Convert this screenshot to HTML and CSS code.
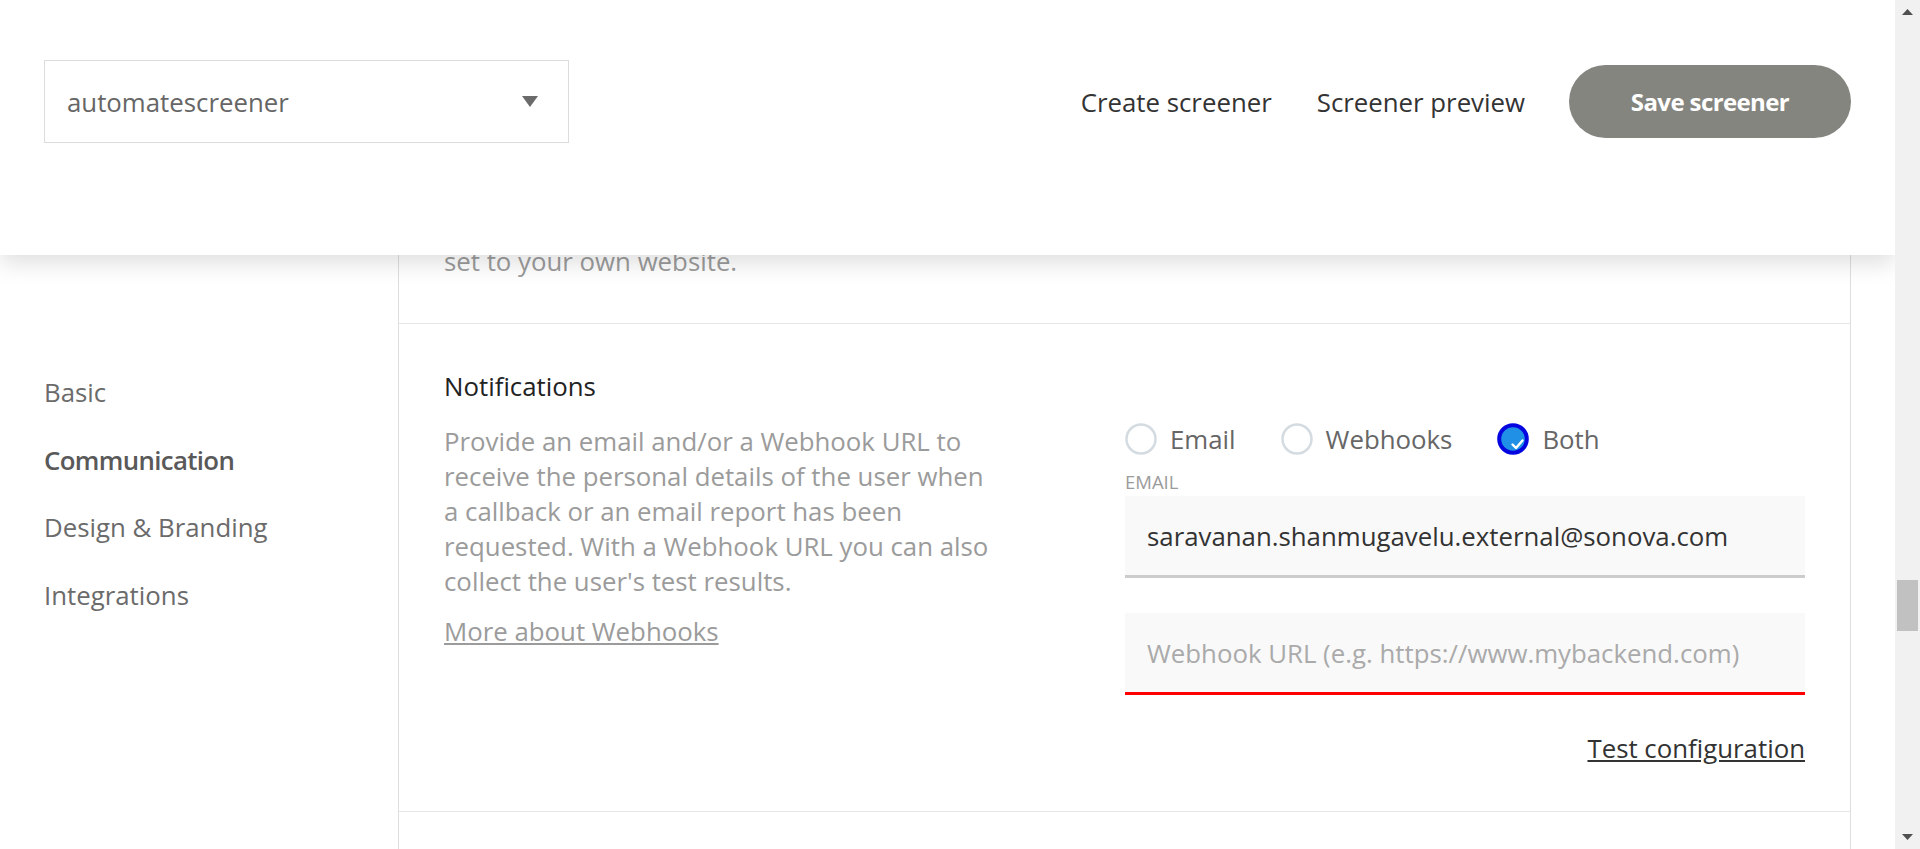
FILE: index.html
```html
<!DOCTYPE html>
<html lang="en">
<head>
<meta charset="utf-8">
<title>Screener settings</title>
<link rel="stylesheet" href="styles.css">
</head>
<body>
<div class="app">
  <div class="viewport">
    <header class="topbar">
      <div class="select">
        <span class="select-value">automatescreener</span>
        <svg class="select-arrow" width="16" height="11" viewBox="0 0 16 11"><path d="M0 0 H16 L8 11 Z" fill="#6b6b6b"/></svg>
      </div>
      <nav class="topnav">
        <a class="topnav-link">Create screener</a>
        <a class="topnav-link">Screener preview</a>
        <button class="save-btn">Save screener</button>
      </nav>
    </header>
    <div class="body">
      <nav class="sidebar">
        <a class="side-link">Basic</a>
        <a class="side-link active">Communication</a>
        <a class="side-link">Design &amp; Branding</a>
        <a class="side-link">Integrations</a>
      </nav>
      <main class="panel">
        <section class="sec sec-prev">
          <p class="desc">set to your own website.</p>
        </section>
        <section class="sec sec-notif">
          <div class="notif-info">
            <h2 class="sec-title">Notifications</h2>
            <p class="desc desc-block">Provide an email and/or a Webhook URL to receive the personal details of the user when a callback or an email report has been requested. With a Webhook URL you can also collect the user's test results.</p>
            <a class="more-link">More about Webhooks</a>
          </div>
          <div class="notif-form">
            <div class="radios">
              <label class="radio">
                <svg width="32" height="32" viewBox="0 0 32 32"><circle cx="16" cy="16" r="14.5" fill="#fff" stroke="#d4dce2" stroke-width="2.5"/></svg>
                <span>Email</span>
              </label>
              <label class="radio">
                <svg width="32" height="32" viewBox="0 0 32 32"><circle cx="16" cy="16" r="14.5" fill="#fff" stroke="#d4dce2" stroke-width="2.5"/></svg>
                <span>Webhooks</span>
              </label>
              <label class="radio">
                <svg width="32" height="32" viewBox="0 0 32 32"><circle cx="16" cy="16" r="13.8" fill="#2090e6" stroke="#0505e0" stroke-width="4"/><path d="M15.5 21.5 L19 25 L25.5 17.5" fill="none" stroke="#fff" stroke-width="2.4" stroke-linecap="round" stroke-linejoin="round"/></svg>
                <span>Both</span>
              </label>
            </div>
            <div class="field-label">EMAIL</div>
            <div class="input">saravanan.shanmugavelu.external@sonova.com</div>
            <div class="input input-error placeholder">Webhook URL (e.g. https://www.mybackend.com)</div>
            <div class="test-row"><a class="test-link">Test configuration</a></div>
          </div>
        </section>
        <section class="sec sec-next"></section>
      </main>
      <div class="gutter"></div>
    </div>
  </div>
  <div class="scrollbar">
    <svg class="sb-arrow" width="11" height="6" viewBox="0 0 11 6"><path d="M0 6 H11 L5.5 0 Z" fill="#505050"/></svg>
    <div class="sb-track"><div class="sb-thumb"></div></div>
    <svg class="sb-arrow" width="11" height="6" viewBox="0 0 11 6"><path d="M0 0 H11 L5.5 6 Z" fill="#505050"/></svg>
  </div>
</div>
</body>
</html>
```
FILE: styles.css
```css
* { box-sizing: border-box; }
html, body { margin: 0; padding: 0; height: 100%; }
body {
  font-family: "Open Sans", "Noto Sans", "Liberation Sans", sans-serif;
  font-size: 25.8px;
  color: #333;
  background: #fff;
  overflow: hidden;
}
.app { display: flex; height: 100vh; overflow: hidden; }
.viewport { flex: 1; display: flex; flex-direction: column; overflow: hidden; min-width: 0; }

.topbar {
  flex: none;
  height: 255px;
  position: relative;
  z-index: 2;
  background: #fff;
  box-shadow: 0 8px 22px rgba(0, 0, 0, 0.13);
  display: flex;
  align-items: flex-start;
  padding: 60px 44px 0 44px;
}
.select {
  width: 525px;
  height: 83px;
  border: 1px solid #dcdcdc;
  display: flex;
  align-items: center;
  justify-content: space-between;
  padding: 0 30px 0 22px;
  color: #666;
}
.select-value { line-height: 36px; }
.topnav {
  margin-left: auto;
  display: flex;
  align-items: center;
  gap: 45px;
  height: 83px;
}
.topnav-link { color: #333; line-height: 36px; }
.save-btn {
  width: 282px;
  height: 73px;
  border: none;
  border-radius: 37px;
  background: #858580;
  color: #fff;
  font-family: inherit;
  font-size: 24px;
  font-weight: 700;
  letter-spacing: -0.6px;
  margin-left: -1px;
}

.body { flex: 1; display: flex; margin-top: -12px; min-height: 0; }
.sidebar {
  width: 398px;
  flex: none;
  padding: 131px 0 0 44px;
  display: flex;
  flex-direction: column;
  gap: 31.7px;
}
.side-link { color: #6b6b6b; line-height: 36px; }
.side-link.active { font-weight: 600; color: #595959; letter-spacing: -0.65px; }

.panel {
  flex: 1;
  border-left: 1px solid #dedede;
  border-right: 1px solid #dedede;
  display: flex;
  flex-direction: column;
}
.gutter { width: 44px; flex: none; }

.sec { border-bottom: 1px solid #e6e6e6; padding: 0 45px; }
.sec-prev { padding-bottom: 44px; }
.sec-prev .desc { margin: 0; line-height: 36px; }
.desc { color: #9b9b9b; margin: 0; }

.sec-notif {
  display: grid;
  grid-template-columns: 1fr 680px;
  padding-top: 45px;
  padding-bottom: 45px;
}
.sec-title { margin: 0; font-size: 25.8px; font-weight: 400; color: #222; line-height: 35px; }
.desc-block { margin-top: 20px; line-height: 35px; max-width: 560px; }
.more-link { display: inline-block; margin-top: 15px; line-height: 35px; color: #9b9b9b; text-decoration: underline; }

.notif-form { padding-top: 52px; display: flex; flex-direction: column; }
.radios { display: flex; gap: 45px; height: 36px; align-items: center; }
.radio { display: flex; align-items: center; gap: 13px; color: #666; line-height: 36px; }
.radio svg { display: block; }
.field-label { font-size: 18.5px; color: #9b9b9b; line-height: 20px; margin-top: 15px; }
.input {
  margin-top: 4px;
  height: 82px;
  background: #f9f9f9;
  border-bottom: 3px solid #cccccc;
  padding: 0 22px;
  display: flex;
  align-items: center;
  color: #333;
}
.input-error { margin-top: 35px; border-bottom-color: #ff0000; }
.placeholder { color: #aaa; }
.test-row { display: flex; justify-content: flex-end; margin-top: 35px; }
.test-link { color: #333; text-decoration: underline; line-height: 36px; }

.sec-next { border-bottom: none; flex: 1; }

.scrollbar {
  width: 25px;
  flex: none;
  background: #f1f1f1;
  display: flex;
  flex-direction: column;
  align-items: center;
  padding: 9px 0 9px 0;
}
.sb-arrow { display: block; flex: none; }
.sb-track { flex: 1; width: 100%; padding: 0 2px; }
.sb-thumb { margin-top: 565px; height: 51px; background: #c1c1c1; }
```
